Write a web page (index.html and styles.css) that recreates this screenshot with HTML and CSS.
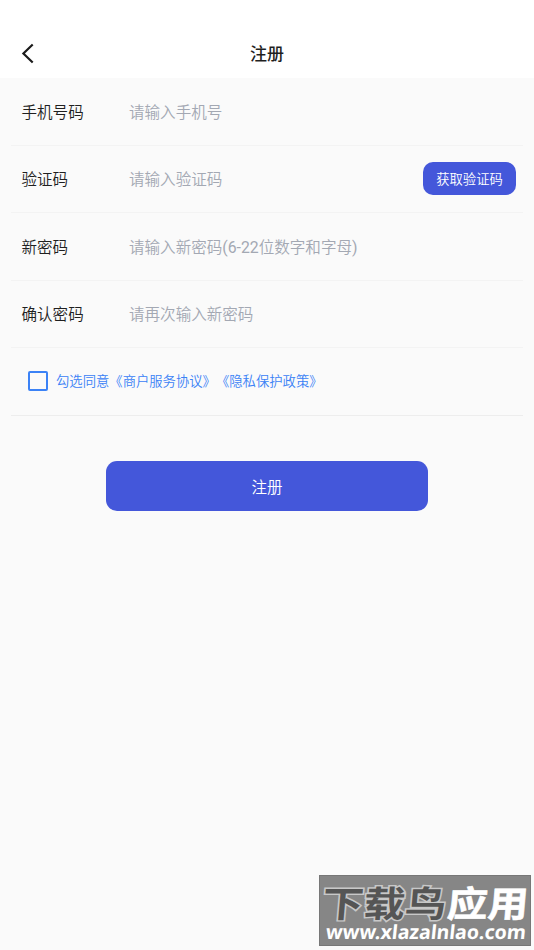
FILE: index.html
```html
<!DOCTYPE html>
<html lang="zh-CN">
<head>
<meta charset="utf-8">
<title>注册</title>
<link rel="stylesheet" href="styles.css">
</head>
<body>
<header class="navbar">
  <button class="back" aria-label="返回"><svg width="14" height="22" viewBox="0 0 14 22"><path d="M11.7 1.5 2.4 10.5l9.3 9" fill="none" stroke="#1b1b1b" stroke-width="2.2"/></svg></button>
  <h1 class="title">注册</h1>
</header>
<main>
  <form class="form">
    <div class="row"><label class="label">手机号码</label><span class="hint">请输入手机号</span></div>
    <div class="row"><label class="label">验证码</label><span class="hint">请输入验证码</span><button type="button" class="code">获取验证码</button></div>
    <div class="row"><label class="label">新密码</label><span class="hint">请输入新密码<span class="latin">(6-22</span>位数字和字母<span class="latin">)</span></span></div>
    <div class="row"><label class="label">确认密码</label><span class="hint">请再次输入新密码</span></div>
    <div class="row agree"><span class="checkbox"></span><span class="terms">勾选同意《商户服务协议》《隐私保护政策》</span></div>
  </form>
  <button class="submit">注册</button>
</main>
<aside class="watermark">
  <svg width="212" height="72" viewBox="0 0 212 72">
    <g class="brand" transform="skewX(-5)">
      <text class="brand-dark" x="6" y="42" textLength="124" lengthAdjust="spacingAndGlyphs">下载鸟</text>
      <text class="brand-light" x="131" y="42" textLength="81" lengthAdjust="spacingAndGlyphs">应用</text>
    </g>
    <text class="site" transform="skewX(-6)" x="13" y="64.5" textLength="200" lengthAdjust="spacingAndGlyphs">www.xlazalnlao.com</text>
  </svg>
</aside>
</body>
</html>
```
FILE: styles.css
```css
* { box-sizing: border-box; }
body {
  margin: 0;
  height: 950px;
  overflow: hidden;
  background: #fafafa;
  color: #1f1f1f;
  font-family: Roboto, "Noto Sans CJK SC", sans-serif;
  text-spacing-trim: space-all;
}
button { border: 0; padding: 0; font-family: inherit; }
.navbar {
  display: grid;
  grid-template-columns: 60px 1fr 60px;
  align-items: center;
  height: 78px;
  padding-top: 29px;
  background: #fff;
}
.back { display: flex; margin-left: 21px; background: none; }
.title { margin: 0; font-size: 17px; line-height: 24px; font-weight: 500; text-align: center; }
.form { padding: 0 11px; }
.row {
  display: flex;
  align-items: center;
  height: 67.5px;
  padding: 0 7px 0 10.5px;
  border-bottom: 1px solid #f3f3f3;
}
.label { width: 107.5px; font-size: 15.55px; font-weight: 350; }
.hint { flex: 1; font-size: 15.55px; font-weight: 350; color: #a3a8b3; }
.latin { font-weight: 400; font-size: 15.8px; }
.label, .hint, .terms { padding-bottom: 1px; }
.code {
  width: 93px;
  height: 33px;
  border-radius: 10px;
  background: #4457da;
  color: #fff;
  font-size: 13.3px;
  font-weight: 350;
}
.agree { padding-left: 17px; border-color: #ededed; }
.checkbox { width: 20px; height: 20px; border: 2px solid #3b82f6; border-radius: 2px; }
.terms { margin-left: 8px; font-size: 13.33px; font-weight: 350; color: #3b82f6; }
.submit {
  display: block;
  width: 322px;
  height: 50px;
  margin: 45.5px auto 0;
  border-radius: 11px;
  background: #4457da;
  color: #fff;
  font-size: 15.5px;
  font-weight: 350;
}
.watermark {
  position: absolute;
  left: 319px;
  top: 875px;
  width: 212px;
  height: 71px;
  background: #868686;
  border: 1px solid #777;
}
.watermark svg { display: block; margin: -1px; overflow: visible; }
.brand { font: 700 36px "Noto Sans CJK SC", sans-serif; }
.brand-dark { fill: #555; stroke: #c8c8c8; stroke-width: 3px; paint-order: stroke; }
.brand-light { fill: #fff; stroke: #fff; stroke-width: 0.6px; }
.site { font: 700 19.5px "Noto Sans", sans-serif; fill: #fff; }
```
